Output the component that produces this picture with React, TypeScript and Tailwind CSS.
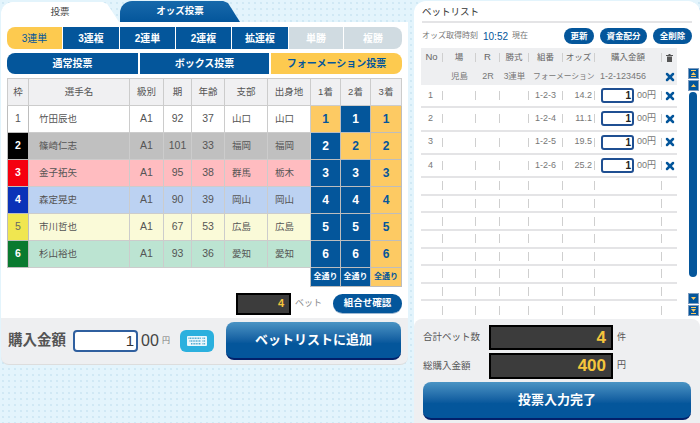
import type { ReactNode } from "react";
import { X } from "lucide-react";

const FONT = "font-['Liberation_Sans','Noto_Sans_CJK_JP',sans-serif]";

const betTypes = [
  { label: "3連単", w: "w-[55px]", state: "on", round: "rounded-l-lg" },
  { label: "3連複", w: "w-[56px]", state: "off" },
  { label: "2連単", w: "w-[55px]", state: "off" },
  { label: "2連複", w: "w-[55px]", state: "off" },
  { label: "拡連複", w: "w-[56px]", state: "off" },
  { label: "単勝", w: "w-[54px]", state: "dis" },
  { label: "複勝", w: "w-[58px]", state: "dis", round: "rounded-r-lg" },
];

const racers = [
  { no: 1, name: "竹田辰也", grade: "A1", term: 92, age: 37, branch: "山口", home: "山口", row: "bg-white", frame: "bg-white text-[#555] font-normal" },
  { no: 2, name: "篠崎仁志", grade: "A1", term: 101, age: 33, branch: "福岡", home: "福岡", row: "bg-[#c0c0c0]", frame: "bg-black text-white" },
  { no: 3, name: "金子拓矢", grade: "A1", term: 95, age: 38, branch: "群馬", home: "栃木", row: "bg-[#ffbcc0]", frame: "bg-[#f5000f] text-white" },
  { no: 4, name: "森定晃史", grade: "A1", term: 90, age: 39, branch: "岡山", home: "岡山", row: "bg-[#bcd2f2]", frame: "bg-[#0a32b8] text-white" },
  { no: 5, name: "市川哲也", grade: "A1", term: 67, age: 53, branch: "広島", home: "広島", row: "bg-[#fafad8]", frame: "bg-[#f0e650] text-[#666] font-normal" },
  { no: 6, name: "杉山裕也", grade: "A1", term: 93, age: 36, branch: "愛知", home: "愛知", row: "bg-[#bce4d2]", frame: "bg-[#0a7a30] text-white" },
];

// which cell is yellow (selected) in each finish column, by racer no
const picks = [[1], [2], [1, 2, 3, 4, 5, 6]];

const bets = [
  { no: 1, combo: "1-2-3", odds: "14.2" },
  { no: 2, combo: "1-2-4", odds: "11.1" },
  { no: 3, combo: "1-2-5", odds: "19.5" },
  { no: 4, combo: "1-2-6", odds: "25.2" },
];

const listCols = "grid grid-cols-[22px_33px_24px_29px_34px_32px_67px_15px]";

function PickCell({ n, on }: { n: number; on: boolean }) {
  return (
    <td className={`border border-[#bdbdbd] text-center text-[12px] font-bold ${on ? "bg-[#fdca63] text-[#04569b]" : "bg-[#04569b] text-white"}`}>
      {n}
    </td>
  );
}

function ScrollBtn({ dir, double }: { dir: "up" | "down"; double?: boolean }) {
  return (
    <div className="flex h-[11px] w-[11px] flex-col items-center justify-center gap-[1px] border border-[#7d9cc0] bg-[#04569b]">
      {double && <div className="h-[1px] w-[5px] bg-[#fdca63]" />}
      <svg width="5" height="3" viewBox="0 0 5 3">
        <path d={dir === "up" ? "M2.5 0L5 3H0z" : "M0 0h5L2.5 3z"} fill="#fdca63" />
      </svg>
      {double && <div className="h-[1px] w-[5px] bg-[#fdca63]" />}
    </div>
  );
}

function Sep({ className = "", children }: { className?: string; children?: ReactNode }) {
  return (
    <div className={`flex h-[9px] items-center border-r border-[#cfcfcf] ${className}`}>{children}</div>
  );
}

function ListRow({ h, children }: { h: string; children?: ReactNode }) {
  return (
    <div className={`${listCols} ${h} items-center border-b-2 border-[#e4e4e6] text-[9px] text-[#777] last:border-b-0`}>
      {children ?? (
        <>
          {[0, 1, 2, 3, 4, 5, 6].map((i) => (
            <Sep key={i} />
          ))}
        </>
      )}
    </div>
  );
}

export default function App() {
  return (
    <div
      className={`${FONT} flex h-[423px] w-[700px] items-start gap-[6px] overflow-hidden bg-[#e3f4fc] bg-[radial-gradient(#cfe8f4_0.7px,transparent_0.8px)] bg-[length:6px_6px] pl-[1px] pt-[1px]`}
    >
      {/* Left: betting panel */}
      <div className="w-[407px]">
        {/* Tabs */}
        <div className="flex h-[21px] items-end gap-[1px]">
          <div className="flex h-[20px] w-[118px] items-center justify-center rounded-tl-xl bg-white text-[9.5px] text-[#444] [clip-path:polygon(0_0,86%_0,90%_10%,100%_100%,0_100%)]">
            投票
          </div>
          <div className="flex h-[21px] w-[120px] items-center justify-center rounded-tl-xl bg-gradient-to-b from-[#1769ab] to-[#04569b] text-[9.5px] font-bold text-white [clip-path:polygon(0_0,86%_0,90%_10%,100%_100%,0_100%)]">
            オッズ投票
          </div>
        </div>

        <div className="bg-white px-[6px] pt-[5px]">
          {/* Bet type */}
          <div className="flex h-[22px] gap-[1px]">
            {betTypes.map((b) => (
              <div
                key={b.label}
                className={`flex ${b.w} items-center justify-center text-[10px] font-bold ${b.round ?? ""} ${
                  b.state === "on" ? "bg-[#fdca4f] font-normal text-[#04569b]" : b.state === "off" ? "bg-[#04569b] text-white" : "bg-[#d0dbe1] text-white"
                }`}
              >
                {b.label}
              </div>
            ))}
          </div>

          {/* Bet mode */}
          <div className="mt-[4px] flex h-[21px] gap-[2px] text-[10px] font-bold">
            <div className="flex w-[131px] items-center justify-center rounded-l-lg bg-[#04569b] text-white">通常投票</div>
            <div className="flex w-[129px] items-center justify-center bg-[#04569b] text-white">ボックス投票</div>
            <div className="flex w-[131px] items-center justify-center rounded-r-lg bg-[#fdca4f] text-[#04569b]">フォーメーション投票</div>
          </div>

          {/* Racers */}
          <table className="mt-[4px] w-[394px] table-fixed border-collapse text-[9.5px] text-[#555]">
            <colgroup>
              <col className="w-[21px]" />
              <col className="w-[101px]" />
              <col className="w-[34px]" />
              <col className="w-[28px]" />
              <col className="w-[33px]" />
              <col className="w-[43px]" />
              <col className="w-[43px]" />
              <col className="w-[30px]" />
              <col className="w-[30px]" />
              <col className="w-[31px]" />
            </colgroup>
            <thead>
              <tr className="h-[27px] bg-[#f0f0f2]">
                {["枠", "選手名", "級別", "期", "年齢", "支部", "出身地", "1着", "2着", "3着"].map((h) => (
                  <th key={h} className="border border-[#cccccc] font-normal">{h}</th>
                ))}
              </tr>
            </thead>
            <tbody>
              {racers.map((r) => (
                <tr key={r.no} className={`h-[27px] ${r.row}`}>
                  <td className={`border border-[#bdbdbd] text-center text-[10.5px] font-bold ${r.frame}`}>{r.no}</td>
                  <td className="border border-[#cccccc] pl-[10px]">{r.name}</td>
                  <td className="border border-[#cccccc] text-center text-[10.5px]">{r.grade}</td>
                  <td className="border border-[#cccccc] text-center text-[10.5px]">{r.term}</td>
                  <td className="border border-[#cccccc] text-center text-[10.5px]">{r.age}</td>
                  <td className="border border-[#cccccc] pl-[7px]">{r.branch}</td>
                  <td className="border border-[#cccccc] pl-[7px]">{r.home}</td>
                  {picks.map((col, i) => (
                    <PickCell key={i} n={r.no} on={col.includes(r.no)} />
                  ))}
                </tr>
              ))}
              <tr className="h-[19px]">
                <td colSpan={7} className="border-0 bg-white" />
                <td className="border border-[#bdbdbd] bg-[#04569b] text-center text-[8px] font-bold text-white">全通り</td>
                <td className="border border-[#bdbdbd] bg-[#04569b] text-center text-[8px] font-bold text-white">全通り</td>
                <td className="border border-[#bdbdbd] bg-[#fdca63] text-center text-[8px] font-bold text-[#04569b]">全通り</td>
              </tr>
            </tbody>
          </table>

          {/* Bet count */}
          <div className="flex h-[31px] items-center justify-end pt-[2px]">
            <div className="flex h-[22px] w-[55px] items-center justify-end border-2 border-black bg-[#3c3c3c] pr-[5px] text-[11px] font-bold text-[#f5c63c]">4</div>
            <span className="ml-[4px] w-[38px] text-[9px] text-[#888]">ベット</span>
            <div className="flex h-[19px] w-[69px] items-center justify-center rounded-full bg-[#04569b] text-[9.5px] font-bold text-white shadow-[0_1px_0_#9fb9d2]">組合せ確認</div>
          </div>
        </div>

        {/* Amount footer */}
        <div className="flex h-[47px] items-center rounded-b-lg border-b border-[#dddddd] bg-[#eeeff1] pl-[7px] pr-[6px]">
          <span className="w-[65px] shrink-0 text-[14.5px] font-bold text-[#555]">購入金額</span>
          <div className="flex h-[22px] w-[65px] shrink-0 items-center justify-end rounded-[4px] border-2 border-[#2f5f9f] bg-white pr-[2px] text-[15px] text-[#333]">1</div>
          <span className="ml-[3px] w-[18px] shrink-0 text-[16px] text-[#444]">00</span>
          <span className="ml-[3px] w-[8px] shrink-0 text-[8px] text-[#777]">円</span>
          <div className="ml-[10px] flex h-[22px] w-[34px] shrink-0 items-center justify-center rounded-md bg-[#2bb0de]">
            <svg width="20" height="10" viewBox="0 0 20 10">
              <rect width="20" height="10" rx="1" fill="#eaf7fc" />
              <g stroke="#4aa8d0" strokeWidth="1.4" strokeDasharray="1 0.6">
                <path d="M1.5 2.2h12.5" />
                <path d="M2.5 5h11.5" />
                <path d="M4 7.8h10" />
                <path d="M15.5 2.2h3" />
                <path d="M15.5 5h3" />
                <path d="M15.5 7.8h3" />
              </g>
            </svg>
          </div>
          <div className="ml-[12px] flex h-[38px] w-[175px] shrink-0 items-center justify-center rounded-lg border-b-2 border-[#02206a] bg-gradient-to-b from-[#4a94c4] to-[#04569b] to-60% text-[13px] font-bold text-white">
            ベットリストに追加
          </div>
        </div>
      </div>

      {/* Right: bet list */}
      <div className="h-[422px] w-[286px] overflow-hidden rounded-t-xl bg-white">
        <div className="mx-[8px] flex h-[22px] items-center border-b-2 border-[#e4e4e6] pt-[2px] text-[9.5px] text-[#333]">
          ベットリスト
        </div>
        <div className="mx-[8px] flex h-[24px] items-center pt-[2px]">
          <span className="text-[8px] text-[#777]">オッズ取得時刻</span>
          <span className="ml-[5px] text-[10px] text-[#04569b]">10:52</span>
          <span className="ml-[4px] text-[8px] text-[#777]">現在</span>
          <div className="ml-auto flex gap-[6px] text-[8.5px] font-bold text-white">
            <div className="flex h-[16px] w-[30px] items-center justify-center rounded-full bg-[#04569b]">更新</div>
            <div className="flex h-[16px] w-[47px] items-center justify-center rounded-full bg-[#04569b]">資金配分</div>
            <div className="flex h-[16px] w-[39px] items-center justify-center rounded-full bg-[#04569b]">全削除</div>
          </div>
        </div>

        <div className="flex pl-[7px] pt-[1px]">
          <div className="w-[256px]">
            {/* List header */}
            <div className="h-[37px] bg-[#eeeff1] text-[#666]">
              <div className={`${listCols} h-[19px] items-center text-[8.5px]`}>
                <Sep className="justify-center text-[9.5px]">No</Sep>
                <Sep className="justify-center">場</Sep>
                <Sep className="justify-center text-[9.5px]">R</Sep>
                {["勝式", "組番", "オッズ", "購入金額"].map((h) => (
                  <Sep key={h} className="justify-center">{h}</Sep>
                ))}
                <div className="flex justify-center">
                  <svg width="7" height="8" viewBox="0 0 7 8">
                    <path d="M0 1h7v1H0zM1 2.5h5V8H1zM2.5 0h2v1h-2z" fill="#555" />
                  </svg>
                </div>
              </div>
              <div className="flex h-[18px] items-center pt-[1px] text-[8.5px] text-[#777]">
                <span className="w-[55px] pl-[30px]">児島</span>
                <span className="w-[24px] text-center text-[9px]">2R</span>
                <span className="w-[29px] text-center">3連単</span>
                <span className="w-[67px] pl-[4px] text-[7.75px] whitespace-nowrap">フォーメーション</span>
                <span className="w-[66px] pl-[4px] text-[9px]">1-2-123456</span>
                <span className="flex w-[15px] justify-center">
                  <X size={12} strokeWidth={5} className="shrink-0 text-[#04569b]" />
                </span>
              </div>
            </div>

            {/* Bets */}
            {bets.map((b) => (
              <ListRow key={b.no} h="h-[23.3px]">
                <Sep className="justify-center pr-[2px]">{b.no}</Sep>
                <Sep />
                <Sep />
                <Sep />
                <Sep className="justify-center">{b.combo}</Sep>
                <Sep className="justify-end pr-[2px]">{b.odds}</Sep>
                <Sep className="pl-[6px]">
                  <span className="flex h-[15px] w-[33px] shrink-0 items-center justify-end rounded-[3px] border-2 border-[#1f4f92] bg-white pr-[1px] text-[10px] font-bold text-[#222]">1</span>
                  <span className="ml-[3px]">00円</span>
                </Sep>
                <div className="flex justify-center">
                  <X size={12} strokeWidth={5} className="shrink-0 text-[#04569b]" />
                </div>
              </ListRow>
            ))}
            {[0, 1, 2, 3, 4, 5, 6, 7].map((i) => (
              <ListRow key={i} h="h-[17.6px]" />
            ))}
          </div>

          {/* Scrollbar */}
          <div className="ml-[11px] flex flex-col pt-[20px]">
            <ScrollBtn dir="up" double />
            <div className="mt-[1px]"><ScrollBtn dir="up" /></div>
            <div className="ml-[1px] mt-[1px] h-[185px] w-[8px] rounded-full bg-[#04569b]" />
            <div className="mt-[16px]"><ScrollBtn dir="down" /></div>
            <div className="mt-[1px]"><ScrollBtn dir="down" double /></div>
          </div>
        </div>

        {/* Totals */}
        <div className="h-[104px] rounded-t-lg bg-[#eeeff1] px-[9px] pt-[6px]">
          <div className="flex h-[25px] items-center">
            <span className="w-[66px] text-[9.5px] text-[#555]">合計ベット数</span>
            <div className="flex h-[25px] w-[124px] items-center justify-end border-2 border-black bg-[#3c3c3c] pr-[5px] text-[17px] font-bold text-[#f5c63c]">4</div>
            <span className="ml-[4px] text-[9px] text-[#555]">件</span>
          </div>
          <div className="mt-[3px] flex h-[26px] items-center">
            <span className="w-[66px] text-[9.5px] text-[#555]">総購入金額</span>
            <div className="flex h-[26px] w-[124px] items-center justify-end border-2 border-black bg-[#3c3c3c] pr-[5px] text-[17px] font-bold text-[#f5c63c]">400</div>
            <span className="ml-[4px] text-[9px] text-[#555]">円</span>
          </div>
          <div className="mt-[3px] flex h-[38px] w-[268px] items-center justify-center rounded-lg border-b-2 border-[#02206a] bg-gradient-to-b from-[#4a94c4] to-[#04569b] to-60% text-[13px] font-bold text-white">
            投票入力完了
          </div>
        </div>
      </div>
    </div>
  );
}
